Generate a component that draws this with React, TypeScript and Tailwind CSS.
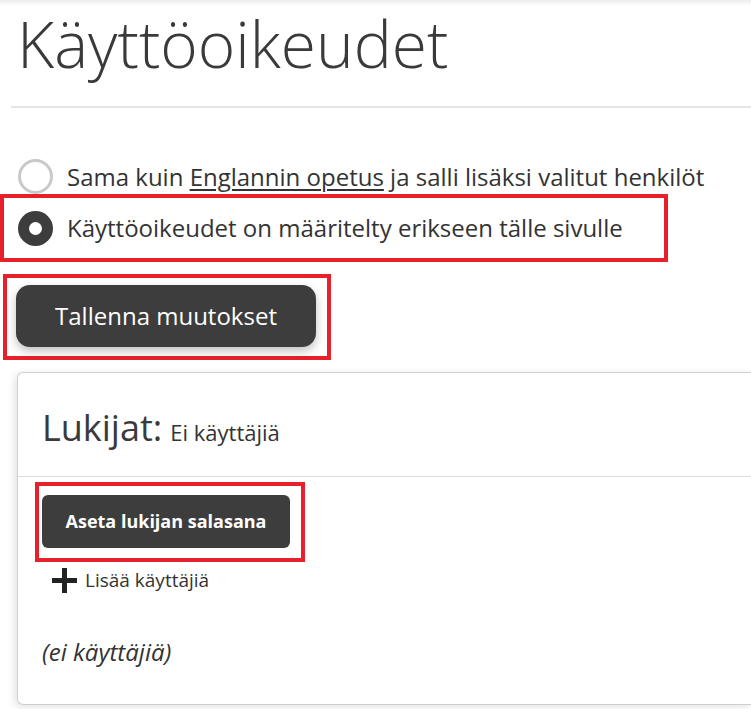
const font = { fontFamily: '"Open Sans", "Liberation Sans", sans-serif' };

function Radio({ checked }: { checked: boolean }) {
  if (checked) {
    return (
      <span className="flex h-[35px] w-[35px] shrink-0 items-center justify-center rounded-full bg-[#3d3d3d]">
        <span className="h-[13px] w-[13px] rounded-full bg-white" />
      </span>
    );
  }
  return <span className="h-[35px] w-[35px] shrink-0 rounded-full border-[3px] border-[#c9c9c9] bg-white" />;
}

function PlusIcon() {
  return (
    <svg width="25" height="25" viewBox="0 0 25 25" className="shrink-0">
      <rect x="10" y="0" width="5" height="25" fill="#222" />
      <rect x="0" y="10" width="25" height="5" fill="#222" />
    </svg>
  );
}

export default function App() {
  return (
    <div
      className="min-h-[709px] w-[751px] overflow-hidden bg-white bg-[linear-gradient(to_bottom,#ececec_0px,#ffffff_6px)] text-[#333]"
      style={font}
    >
      <h1 className="pl-[17px] text-[64px] font-light leading-[88px] text-[#3a3a3a]">Käyttöoikeudet</h1>
      <div className="ml-[11px] mt-[18px] border-t-2 border-[#e6e6e6]" />

      <div className="mt-[51px] flex items-center gap-[14px] pl-[18px]">
        <Radio checked={false} />
        <span className="text-[24px] leading-[30px] text-[#333]">
          Sama kuin <span className="underline underline-offset-[3px]">Englannin opetus</span> ja salli lisäksi
          valitut henkilöt
        </span>
      </div>

      <div className="mt-0 flex h-[68px] w-[668px] items-center gap-[14px] border-4 border-[#e8202a] pl-[14px]">
        <Radio checked />
        <span className="text-[24px] leading-[30px] text-[#333]">Käyttöoikeudet on määritelty erikseen tälle sivulle</span>
      </div>

      <div className="ml-[3px] mt-[12px] w-[328px] border-4 border-[#e8202a] px-[9px] pb-[9px] pt-[7px]">
        <button className="h-[62px] w-[300px] rounded-[14px] bg-[#3d3d3d] text-[24px] text-white shadow-[0_4px_10px_rgba(0,0,0,0.25)]">
          Tallenna muutokset
        </button>
      </div>

      <div className="ml-[17px] mt-[12px] h-[333px] rounded-l-[6px] border border-r-0 border-[#cfcfcf] shadow-[-2px_2px_8px_rgba(0,0,0,0.12)]">
        <div className="flex h-[103px] items-baseline pl-[24px] pt-[30px]">
          <span className="text-[36px] leading-[50px] text-[#3a3a3a]">Lukijat:</span>
          <span className="ml-[8px] text-[22px] text-[#333]">Ei käyttäjiä</span>
        </div>
        <div className="border-t border-[#dcdcdc]" />
        <div className="ml-[17px] mt-[5px] w-[270px] border-4 border-[#e8202a] px-[3px] pb-[10px] pt-[9px]">
          <button className="h-[53px] w-[248px] rounded-[6px] bg-[#3d3d3d] text-[18px] font-bold text-white">
            Aseta lukijan salasana
          </button>
        </div>
        <div className="ml-[34px] mt-[5px] flex items-center gap-[8px]">
          <PlusIcon />
          <span className="text-[19px] leading-[26px] text-[#333]">Lisää käyttäjiä</span>
        </div>
        <div className="ml-[24px] mt-[42px] text-[24px] italic leading-[33px] text-[#333]">(ei käyttäjiä)</div>
      </div>
    </div>
  );
}
